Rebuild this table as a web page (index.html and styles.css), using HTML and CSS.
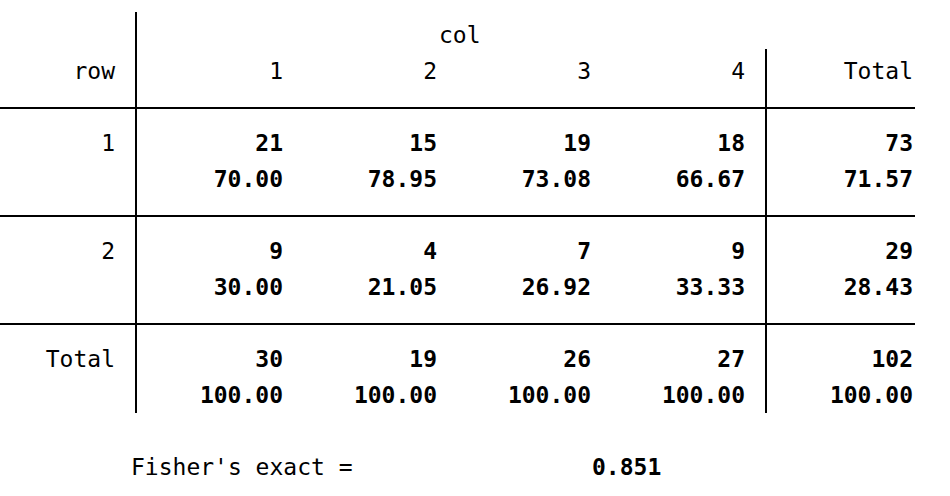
FILE: index.html
```html
<!doctype html>
<html lang="en">
<head>
<meta charset="utf-8">
<title>Tabulation of row by col</title>
<meta name="viewport" content="width=device-width, initial-scale=1">
<link rel="stylesheet" href="styles.css">
</head>
<body>

<div class="xtab">
  <div class="r head-a">
    <div class="stub"></div>
    <div class="vl"></div>
    <div class="title">col</div>
  </div>
  <div class="r head-b">
    <div class="stub">row</div>
    <div class="vl"></div>
    <div class="c">1</div>
    <div class="c">2</div>
    <div class="c">3</div>
    <div class="c">4</div>
    <div class="vl"></div>
    <div class="c tot">Total</div>
  </div>
  <div class="rule"></div>
  <div class="r body">
    <div class="stub">1</div>
    <div class="vl"></div>
    <div class="c num">21<br>70.00</div>
    <div class="c num">15<br>78.95</div>
    <div class="c num">19<br>73.08</div>
    <div class="c num">18<br>66.67</div>
    <div class="vl"></div>
    <div class="c tot num">73<br>71.57</div>
  </div>
  <div class="rule"></div>
  <div class="r body">
    <div class="stub">2</div>
    <div class="vl"></div>
    <div class="c num">9<br>30.00</div>
    <div class="c num">4<br>21.05</div>
    <div class="c num">7<br>26.92</div>
    <div class="c num">9<br>33.33</div>
    <div class="vl"></div>
    <div class="c tot num">29<br>28.43</div>
  </div>
  <div class="rule"></div>
  <div class="r body last">
    <div class="stub">Total</div>
    <div class="vl"></div>
    <div class="c num">30<br>100.00</div>
    <div class="c num">19<br>100.00</div>
    <div class="c num">26<br>100.00</div>
    <div class="c num">27<br>100.00</div>
    <div class="vl"></div>
    <div class="c tot num">102<br>100.00</div>
  </div>
</div>

<div class="fisher">
  <span class="flabel">Fisher's exact =</span>
  <span class="num">0.851</span>
</div>

</body>
</html>
```

FILE: styles.css
```css
body {
  margin: 0;
  padding-top: 12px;
  font: 23px/36px "DejaVu Sans Mono", monospace;
  color: #000;
  background: #fff;
}
.xtab {
  width: 915px;
}
.r {
  display: grid;
  grid-template-columns: 135px 2px 166px 154px 154px 154px 2px 148px;
}
.vl {
  background: #000;
}
.stub {
  text-align: right;
  padding-right: 20px;
}
.c {
  text-align: right;
  padding-right: 20px;
}
.c.tot {
  padding-right: 2px;
}
.title {
  grid-column: 3 / 9;
  padding-left: 302px;
}
.head-a {
  height: 37px;
}
.head-a .title {
  padding-top: 5px;
}
.head-b {
  height: 58px;
}
.head-b > div:not(.vl) {
  padding-top: 4px;
}
.body {
  height: 106px;
}
.body.last {
  height: 85px;
}
.body > div:not(.vl) {
  padding-top: 16px;
}
.num {
  font-weight: bold;
}
.rule {
  height: 2px;
  background: #000;
}
.fisher {
  display: flex;
  margin-top: 39px;
  padding-left: 131px;
}
.flabel {
  width: 461px;
}
```
